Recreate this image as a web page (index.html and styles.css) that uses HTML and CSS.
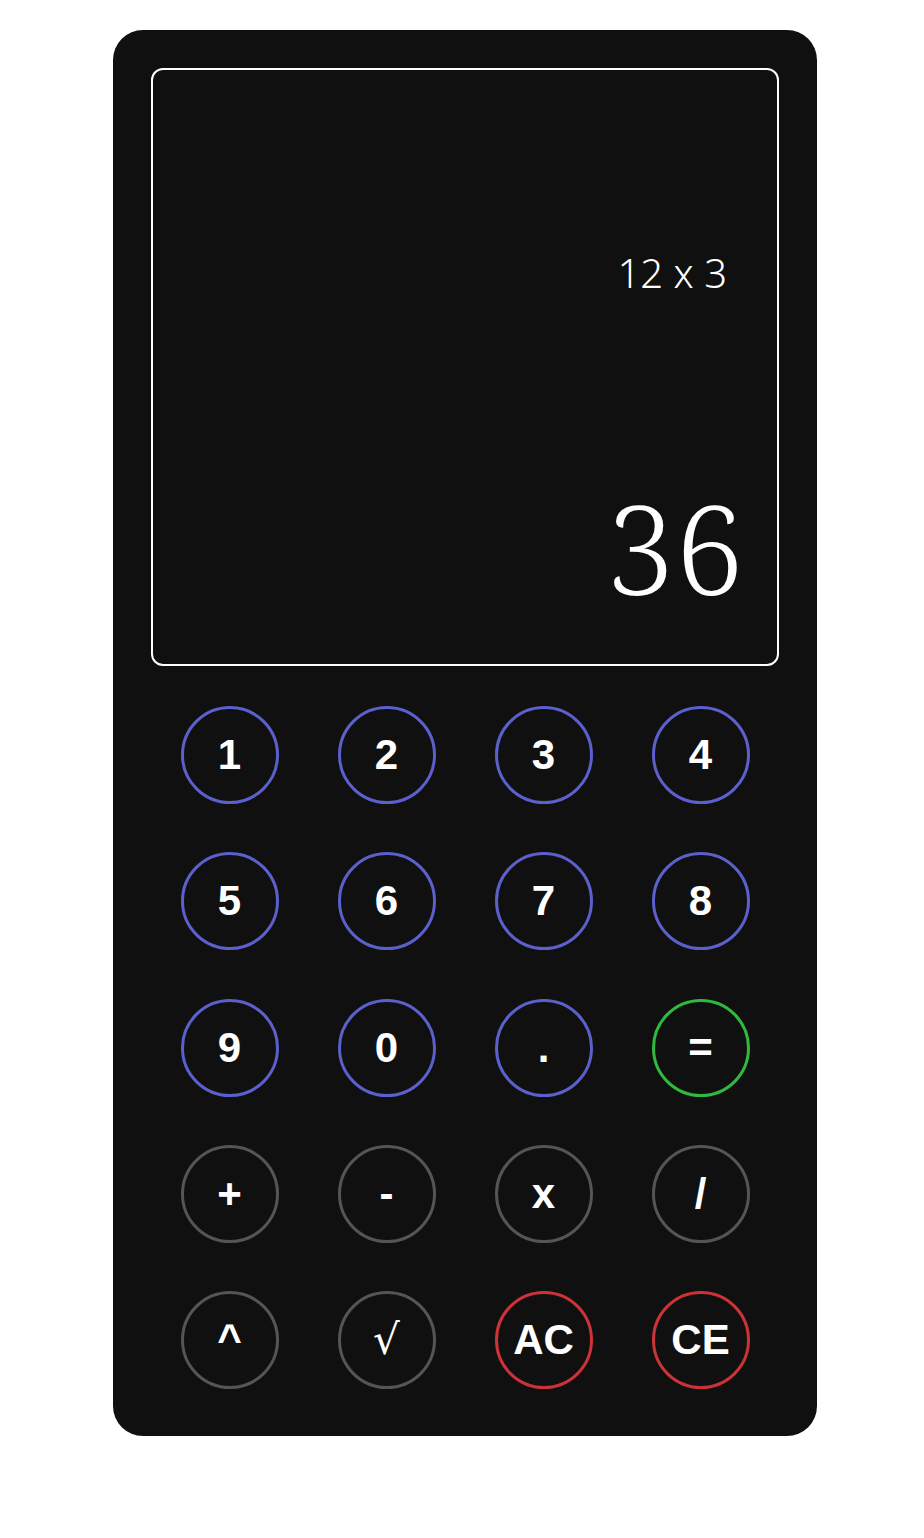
FILE: index.html
```html
<!DOCTYPE html>
<html lang="en">
<head>
<meta charset="utf-8">
<title>Calculator</title>
<link rel="stylesheet" href="styles.css">
</head>
<body>
<main class="calculator">
  <section class="display">
    <div class="expression">12 x 3</div>
    <div class="result">36</div>
  </section>
  <section class="keypad">
    <button class="key num">1</button>
    <button class="key num">2</button>
    <button class="key num">3</button>
    <button class="key num">4</button>
    <button class="key num">5</button>
    <button class="key num">6</button>
    <button class="key num">7</button>
    <button class="key num">8</button>
    <button class="key num">9</button>
    <button class="key num">0</button>
    <button class="key num">.</button>
    <button class="key equals">=</button>
    <button class="key op">+</button>
    <button class="key op">-</button>
    <button class="key op">x</button>
    <button class="key op">/</button>
    <button class="key op">^</button>
    <button class="key op sqrt">√</button>
    <button class="key clear">AC</button>
    <button class="key clear">CE</button>
  </section>
</main>
</body>
</html>
```
FILE: styles.css
```css
html, body {
  margin: 0;
  padding: 0;
  background: #ffffff;
}

body {
  padding: 30px 0 0 113px;
}

.calculator {
  width: 704px;
  box-sizing: border-box;
  background: #111010;
  border-radius: 30px;
  padding: 38px 38px 47px 38px;
}

.display {
  box-sizing: border-box;
  height: 598px;
  border: 2px solid #ffffff;
  border-radius: 12px;
  display: flex;
  flex-direction: column;
  align-items: flex-end;
  padding: 183px 0 55px 0;
  color: #ffffff;
}

.expression {
  font-family: "Noto Sans", "Open Sans", sans-serif;
  font-weight: 300;
  font-size: 40px;
  line-height: 1;
  margin-right: 50px;
}

.result {
  margin-top: auto;
  font-family: "Noto Serif", "Liberation Serif", serif;
  font-weight: 300;
  font-size: 123px;
  line-height: 1;
  margin-right: 33px;
}

.keypad {
  margin-top: 40px;
  display: grid;
  grid-template-columns: repeat(4, 1fr);
  grid-auto-rows: 98px;
  row-gap: 48.25px;
  justify-items: center;
}

.key {
  width: 98px;
  height: 98px;
  box-sizing: border-box;
  border-radius: 50%;
  background: transparent;
  border: 3px solid #5b60cc;
  color: #ffffff;
  font-family: "Liberation Sans", Arial, sans-serif;
  font-weight: 700;
  font-size: 42px;
  line-height: 1;
  padding: 0;
  display: flex;
  align-items: center;
  justify-content: center;
}

.key.equals {
  border-color: #2fba3d;
}

.key.op {
  border-color: #555555;
}

.key.clear {
  border-color: #cc3338;
}

.key.sqrt {
  font-family: "DejaVu Sans", sans-serif;
  font-weight: 400;
}
```
